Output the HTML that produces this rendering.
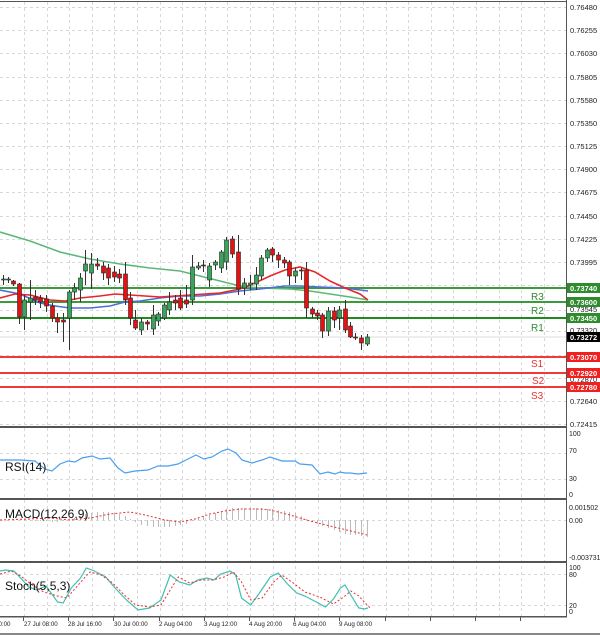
<!DOCTYPE html>
<html><head><meta charset="utf-8"><style>
html,body{margin:0;padding:0;background:#fff;}
svg{display:block;font-family:"Liberation Sans",sans-serif;}
</style></head><body>
<svg id="s" width="600" height="635" viewBox="0 0 600 635" xmlns="http://www.w3.org/2000/svg">
<rect width="600" height="635" fill="#fff"/>
<g id="grid"></g>
<g id="lv">
<line x1="0" y1="288" x2="566" y2="288" stroke="#3b9a3b" stroke-width="2"/>
<line x1="0" y1="302" x2="566" y2="302" stroke="#3b9a3b" stroke-width="2"/>
<line x1="0" y1="318" x2="566" y2="318" stroke="#1f8a1f" stroke-width="2"/>
<line x1="0" y1="337" x2="566" y2="337" stroke="#ddd" stroke-width="1"/>
<line x1="0" y1="357" x2="566" y2="357" stroke="#f03a3a" stroke-width="2"/>
<line x1="0" y1="373" x2="566" y2="373" stroke="#f03a3a" stroke-width="2"/>
<line x1="0" y1="387" x2="566" y2="387" stroke="#f03a3a" stroke-width="2"/>
</g>
<g id="ma">
<polyline fill="none" stroke="#5cb87a" stroke-width="1.6" points="0,232 30,241 60,252 90,259 120,264 150,268 180,271 200,276 220,281 240,286 260,288 290,289 310,291 330,294 350,297 368,300"/>
<polyline fill="none" stroke="#4a6fd8" stroke-width="1.6" points="0,290 20,294 40,303 55,306 70,308 90,308 110,306 125,302 140,301 160,298 180,296 200,296 220,294 240,291 260,289 285,286 300,286 320,287 345,288 368,291"/>
<polyline fill="none" stroke="#e8262a" stroke-width="1.6" points="0,298 15,294 30,295 50,300 65,301 80,298 100,296 115,294 130,295 145,296 160,297 175,296 190,295 205,294 220,293 240,289 255,283 270,276 285,270 300,267 315,272 330,281 345,288 360,294 368,300"/>
</g>
<g id="candles"></g>
<g id="ind"></g>
<line x1="0" y1="1.5" x2="567" y2="1.5" stroke="#555" stroke-width="1"/>
<line x1="566.5" y1="0" x2="566.5" y2="617" stroke="#555" stroke-width="1"/>
<rect x="0" y="426" width="567" height="2" fill="#555"/>
<rect x="0" y="498" width="567" height="2" fill="#555"/>
<rect x="0" y="561" width="567" height="2" fill="#555"/>
<rect x="0" y="616" width="567" height="1.5" fill="#555"/>
<rect x="0" y="633" width="600" height="2" fill="#888"/>
<g font-size="7.5" fill="#222">
<text x="570" y="10">0.76480</text>
<text x="570" y="33">0.76255</text>
<text x="570" y="56">0.76030</text>
<text x="570" y="80">0.75805</text>
<text x="570" y="103">0.75580</text>
<text x="570" y="126">0.75350</text>
<text x="570" y="149">0.75125</text>
<text x="570" y="172">0.74900</text>
<text x="570" y="195">0.74675</text>
<text x="570" y="219">0.74450</text>
<text x="570" y="242">0.74225</text>
<text x="570" y="265">0.73995</text>
<text x="570" y="312">0.73545</text>
<text x="570" y="333">0.73320</text>
<text x="570" y="382">0.72870</text>
<text x="570" y="404">0.72640</text>
<text x="570" y="427">0.72415</text>
</g>
<g font-size="7.5" font-weight="bold" fill="#fff">
<rect x="567" y="283" width="33" height="10" fill="#2e8b2e"/><text x="570" y="291">0.73740</text>
<rect x="567" y="297" width="33" height="10" fill="#2e8b2e"/><text x="570" y="305">0.73600</text>
<rect x="567" y="313" width="33" height="10" fill="#2e8b2e"/><text x="570" y="321">0.73450</text>
<rect x="567" y="332" width="33" height="10" fill="#000"/><text x="570" y="340">0.73272</text>
<rect x="567" y="352" width="33" height="10" fill="#f02020"/><text x="570" y="360">0.73070</text>
<rect x="567" y="368" width="33" height="10" fill="#f02020"/><text x="570" y="376">0.72920</text>
<rect x="567" y="382" width="33" height="10" fill="#f02020"/><text x="570" y="390">0.72780</text>
</g>
<g font-size="10">
<text x="531" y="300" fill="#2e8b2e">R3</text>
<text x="531" y="314" fill="#2e8b2e">R2</text>
<text x="531" y="331" fill="#2e8b2e">R1</text>
<text x="531" y="367" fill="#f03030">S1</text>
<text x="532" y="384" fill="#f03030">S2</text>
<text x="531" y="399" fill="#f03030">S3</text>
</g>
<g font-size="12" fill="#111">
<text x="5" y="471">RSI(14)</text>
<text x="5" y="518">MACD(12,26,9)</text>
<text x="5" y="590">Stoch(5,5,3)</text>
</g>
<g font-size="7" fill="#222">
<text x="569" y="436">100</text><text x="569" y="453">70</text><text x="569" y="481">30</text><text x="569" y="497">0</text>
<text x="569" y="510">0.001502</text><text x="569" y="523">0.00</text><text x="569" y="560">-0.003731</text>
<text x="569" y="570">100</text><text x="569" y="577">80</text><text x="569" y="608">20</text><text x="569" y="614">0</text>
</g>
<g font-size="6.2" fill="#222">
<text x="-5" y="626">00:00</text>
<text x="24" y="626">27 Jul 08:00</text>
<text x="68" y="626">28 Jul 16:00</text>
<text x="114" y="626">30 Jul 00:00</text>
<text x="159" y="626">2 Aug 04:00</text>
<text x="204" y="626">3 Aug 12:00</text>
<text x="249" y="626">4 Aug 20:00</text>
<text x="293" y="626">6 Aug 04:00</text>
<text x="339" y="626">9 Aug 08:00</text>
</g>
</svg>
<script>
var NS="http://www.w3.org/2000/svg";
function el(p,t,a){var e=document.createElementNS(NS,t);for(var k in a)e.setAttribute(k,a[k]);p.appendChild(e);return e;}
var g=document.getElementById('grid');
for(var x=24;x<566;x+=22.6){el(g,'line',{x1:Math.round(x)+.5,y1:2,x2:Math.round(x)+.5,y2:616,stroke:'#d8d8d8','stroke-dasharray':'3,3'});}
[7,30,53,77,100,123,146,169,192,216,239,262,285,310,331,355,378,401,424,453,479,520,574,605].forEach(function(y){el(g,'line',{x1:0,y1:y+.5,x2:566,y2:y+.5,stroke:'#d8d8d8','stroke-dasharray':'3,3'});});
for(var x=24;x<566;x+=45.2){el(g,'line',{x1:Math.round(x)-.5,y1:617,x2:Math.round(x)-.5,y2:621,stroke:'#555'});}
var C=[[3,279,280,275,285,'g'],[8,279,280,277,283,'g'],[13,281,284,280,286,'r'],[19,284,317,283,324,'r'],[24,300,317,295,330,'g'],[30,298,302,280,320,'g'],[35,297,300,290,305,'r'],[40,298,302,295,308,'r'],[46,299,306,295,312,'r'],[52,306,318,303,322,'r'],[57,318,322,313,333,'r'],[63,320,322,313,342,'r'],[69,292,318,290,350,'g'],[74,288,292,283,300,'g'],[80,278,290,273,302,'g'],[85,264,271,250,285,'g'],[91,264,273,253,289,'g'],[97,264,266,258,270,'r'],[103,266,273,262,280,'r'],[108,268,278,264,285,'r'],[114,272,277,266,282,'r'],[119,274,278,269,283,'r'],[125,274,300,262,305,'r'],[130,298,318,292,325,'r'],[135,320,328,310,330,'r'],[141,322,330,318,335,'g'],[147,322,324,320,330,'r'],[153,315,329,305,335,'g'],[158,314,321,312,326,'g'],[164,305,318,303,320,'g'],[169,302,310,292,315,'g'],[175,300,303,295,310,'r'],[180,298,308,290,310,'r'],[186,300,304,285,308,'r'],[192,267,300,255,305,'g'],[198,266,268,262,270,'g'],[203,265,266,260,272,'r'],[209,266,280,263,287,'g'],[215,262,265,260,270,'g'],[221,252,268,250,273,'g'],[226,240,262,237,270,'g'],[232,239,254,236,258,'r'],[238,252,289,235,295,'r'],[244,283,288,278,295,'g'],[250,283,285,275,290,'g'],[256,275,284,267,290,'g'],[261,258,276,255,280,'g'],[267,250,258,248,262,'g'],[272,249,255,247,262,'r'],[278,255,260,252,268,'r'],[284,260,263,257,268,'r'],[289,262,276,260,285,'r'],[295,271,276,268,283,'g'],[301,270,271,268,280,'r'],[306,270,308,262,318,'r'],[312,309,314,307,318,'r'],[317,313,316,310,320,'r'],[322,315,331,313,338,'r'],[328,311,331,307,336,'g'],[334,311,320,307,328,'r'],[339,310,318,306,330,'g'],[345,309,330,300,333,'r'],[350,326,337,322,338,'r'],[355,337,338,333,340,'r'],[361,338,343,335,350,'r'],[367,337,344,334,346,'g']];
var cg=document.getElementById('candles');
C.forEach(function(c){el(cg,'line',{x1:c[0]+.5,y1:c[3],x2:c[0]+.5,y2:c[4],stroke:'#333','stroke-width':1});
el(cg,'rect',{x:c[0]-1.5,y:c[1],width:4,height:Math.max(1,c[2]-c[1]),fill:c[5]=='g'?'#3aa55a':'#e81010',stroke:'#222','stroke-width':.6});});
var ig=document.getElementById('ind');
el(ig,'polyline',{fill:'none',stroke:'#4a9ef0','stroke-width':1.2,points:'0,460 20,460 35,461 45,469 52,471 60,464 68,461 75,462 82,458 92,456 100,459 110,458 118,468 125,473 135,471 148,470 158,466 168,466 178,464 186,460 196,455 204,459 212,457 222,451 228,449 232,451 236,453 242,460 252,463 262,460 270,457 282,461 295,461 300,464 312,465 320,474 328,472 335,474 340,472 345,473 350,473 358,474 367,473'});
var mv=[0,0,0,0,-1,-1,-1,-1,-1,-2,-2,-1,0,2,4,6,7,8,8,8,7,6,4,1,-2,-5,-6,-7,-7,-7,-7,-6,-5,-4,-1,2,4,5,7,9,11,12,12,12,12,12,12,11,11,10,9,8,7,4,1,-2,-4,-6,-8,-10,-12,-14,-15,-15,-16,-17];
mv.forEach(function(v,i){var x=C[i]?C[i][0]+.5:0;el(ig,'line',{x1:x,y1:520,x2:x,y2:520-v,stroke:'#bbb','stroke-width':1});});
el(ig,'polyline',{fill:'none',stroke:'#e83030','stroke-width':1,'stroke-dasharray':'2,2',points:'0,520 30,519 50,518 70,520 90,518 110,514 130,512 145,515 165,520 180,522 195,519 210,514 225,511 240,509 260,509 270,510 290,515 310,521 330,526 355,532 367,535'});
function sc(s){return s.split(' ').map(function(p){var a=p.split(',');return (parseFloat(a[0])*1.15).toFixed(1)+','+a[1];}).join(' ');}
el(ig,'polyline',{fill:'none',stroke:'#40c0b0','stroke-width':1.2,points:sc('0,571 5,570 12,571 18,578 25,587 32,590 40,586 50,602 55,603 62,588 70,578 75,568 82,571 92,577 100,588 110,600 120,610 130,608 140,600 148,575 156,582 165,585 172,580 180,578 186,580 192,574 200,571 205,575 210,598 218,605 225,594 235,577 242,573 250,584 258,593 265,596 275,602 283,607 290,599 296,588 300,585 305,595 312,608 317,609 320,608')});
el(ig,'polyline',{fill:'none',stroke:'#e83030','stroke-width':1,'stroke-dasharray':'2,2',points:sc('0,574 10,571 18,576 28,585 38,592 50,596 58,598 68,585 78,572 88,575 98,583 108,595 118,605 130,607 140,605 148,590 155,577 165,583 175,580 185,580 195,577 203,572 210,582 218,600 228,598 238,582 245,575 255,583 265,592 278,597 290,604 300,596 305,591 312,596 320,606 322,608')});
</script>
</body></html>
